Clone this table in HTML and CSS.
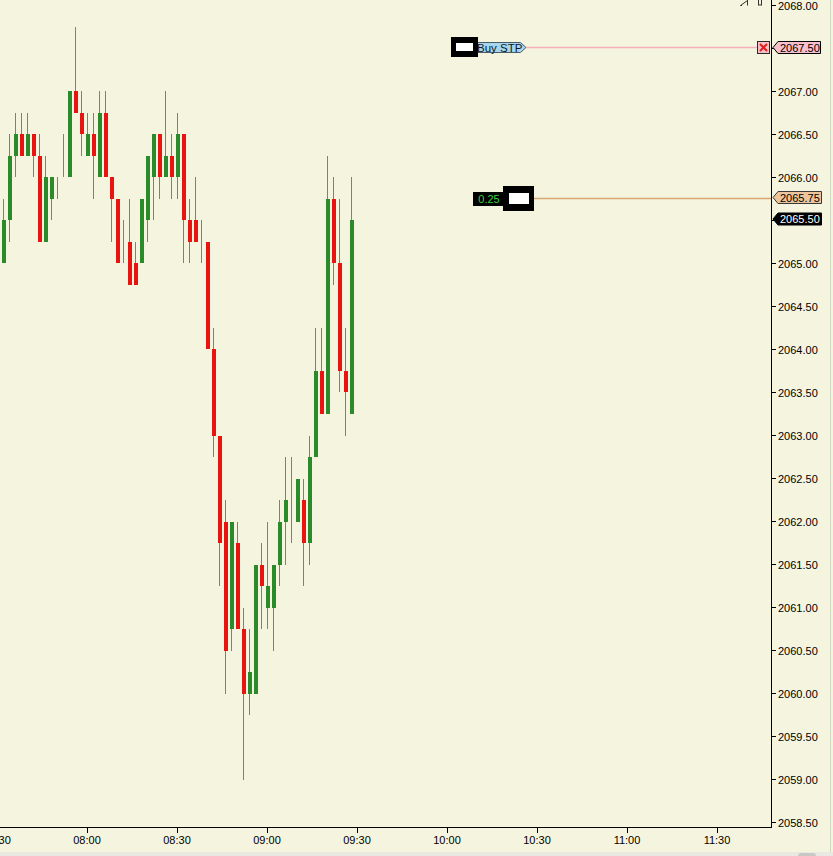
FILE: index.html
```html
<!DOCTYPE html>
<html>
<head>
<meta charset="utf-8">
<title>Chart</title>
<link rel="stylesheet" href="styles.css">
</head>
<body>
<div class="window">
  <div class="chart">
    <div class="plot">
      <svg class="plot-svg" width="771" height="827" viewBox="0 0 771 827">
        <g transform="translate(0 5) scale(1 21.526)" shape-rendering="crispEdges">
          <g class="wick">
            <rect x="3" y="9" width="1" height="3"/>
            <rect x="9" y="6" width="1" height="5"/>
            <rect x="15" y="5" width="1" height="3"/>
            <rect x="21" y="5" width="1" height="2"/>
            <rect x="27" y="5" width="1" height="2"/>
            <rect x="33" y="6" width="1" height="2"/>
            <rect x="39" y="6" width="1" height="5"/>
            <rect x="45" y="7" width="1" height="4"/>
            <rect x="51" y="8" width="1" height="2"/>
            <rect x="57" y="8" width="1" height="1"/>
            <rect x="63" y="6" width="1" height="2"/>
            <rect x="75" y="1" width="1" height="4"/>
            <rect x="81" y="4" width="1" height="3"/>
            <rect x="87" y="5" width="1" height="2"/>
            <rect x="93" y="5" width="1" height="4"/>
            <rect x="99" y="4" width="1" height="4"/>
            <rect x="105" y="4" width="1" height="4"/>
            <rect x="111" y="8" width="1" height="3"/>
            <rect x="123" y="10" width="1" height="2"/>
            <rect x="129" y="9" width="1" height="4"/>
            <rect x="135" y="11" width="1" height="2"/>
            <rect x="147" y="7" width="1" height="4"/>
            <rect x="153" y="6" width="1" height="4"/>
            <rect x="159" y="6" width="1" height="3"/>
            <rect x="165" y="4" width="1" height="4"/>
            <rect x="171" y="6" width="1" height="3"/>
            <rect x="177" y="5" width="1" height="4"/>
            <rect x="183" y="6" width="1" height="6"/>
            <rect x="189" y="9" width="1" height="3"/>
            <rect x="195" y="8" width="1" height="3"/>
            <rect x="201" y="10" width="1" height="2"/>
            <rect x="213" y="15" width="1" height="6"/>
            <rect x="219" y="20" width="1" height="7"/>
            <rect x="225" y="23" width="1" height="9"/>
            <rect x="231" y="24" width="1" height="6"/>
            <rect x="237" y="24" width="1" height="5"/>
            <rect x="243" y="28" width="1" height="8"/>
            <rect x="249" y="29" width="1" height="4"/>
            <rect x="261" y="25" width="1" height="4"/>
            <rect x="267" y="24" width="1" height="5"/>
            <rect x="273" y="26" width="1" height="4"/>
            <rect x="279" y="23" width="1" height="4"/>
            <rect x="285" y="21" width="1" height="5"/>
            <rect x="291" y="21" width="1" height="4"/>
            <rect x="303" y="22" width="1" height="5"/>
            <rect x="309" y="20" width="1" height="6"/>
            <rect x="315" y="15" width="1" height="6"/>
            <rect x="321" y="15" width="1" height="4"/>
            <rect x="327" y="7" width="1" height="12"/>
            <rect x="333" y="8" width="1" height="5"/>
            <rect x="339" y="9" width="1" height="9"/>
            <rect x="345" y="15" width="1" height="5"/>
            <rect x="351" y="8" width="1" height="11"/>
          </g>
          <g class="up">
            <rect x="2" y="10" width="4" height="2"/>
            <rect x="8" y="7" width="4" height="3"/>
            <rect x="14" y="6" width="4" height="1"/>
            <rect x="26" y="6" width="4" height="1"/>
            <rect x="44" y="8" width="4" height="3"/>
            <rect x="50" y="8" width="4" height="1"/>
            <rect x="68" y="4" width="4" height="4"/>
            <rect x="86" y="6" width="4" height="1"/>
            <rect x="98" y="5" width="4" height="3"/>
            <rect x="140" y="9" width="4" height="3"/>
            <rect x="146" y="7" width="4" height="3"/>
            <rect x="152" y="6" width="4" height="2"/>
            <rect x="164" y="7" width="4" height="1"/>
            <rect x="176" y="6" width="4" height="2"/>
            <rect x="230" y="24" width="4" height="5"/>
            <rect x="248" y="31" width="4" height="1"/>
            <rect x="254" y="26" width="4" height="6"/>
            <rect x="266" y="27" width="4" height="1"/>
            <rect x="272" y="26" width="4" height="2"/>
            <rect x="278" y="24" width="4" height="2"/>
            <rect x="284" y="23" width="4" height="1"/>
            <rect x="296" y="22" width="4" height="2"/>
            <rect x="308" y="21" width="4" height="4"/>
            <rect x="314" y="17" width="4" height="4"/>
            <rect x="326" y="9" width="4" height="10"/>
            <rect x="350" y="10" width="4" height="9"/>
          </g>
          <g class="dn">
            <rect x="20" y="6" width="4" height="1"/>
            <rect x="32" y="6" width="4" height="1"/>
            <rect x="38" y="7" width="4" height="4"/>
            <rect x="74" y="4" width="4" height="1"/>
            <rect x="80" y="5" width="4" height="1"/>
            <rect x="92" y="6" width="4" height="1"/>
            <rect x="104" y="5" width="4" height="3"/>
            <rect x="110" y="8" width="4" height="1"/>
            <rect x="116" y="9" width="4" height="3"/>
            <rect x="128" y="11" width="4" height="2"/>
            <rect x="134" y="12" width="4" height="1"/>
            <rect x="158" y="6" width="4" height="2"/>
            <rect x="170" y="7" width="4" height="1"/>
            <rect x="182" y="6" width="4" height="4"/>
            <rect x="188" y="10" width="4" height="1"/>
            <rect x="194" y="10" width="4" height="1"/>
            <rect x="206" y="11" width="4" height="5"/>
            <rect x="212" y="16" width="4" height="4"/>
            <rect x="218" y="20" width="4" height="5"/>
            <rect x="224" y="24" width="4" height="6"/>
            <rect x="236" y="25" width="4" height="4"/>
            <rect x="242" y="29" width="4" height="3"/>
            <rect x="260" y="26" width="4" height="1"/>
            <rect x="302" y="23" width="4" height="2"/>
            <rect x="320" y="17" width="4" height="2"/>
            <rect x="332" y="9" width="4" height="3"/>
            <rect x="338" y="12" width="4" height="5"/>
            <rect x="344" y="17" width="4" height="1"/>
          </g>
        </g>

        <!-- toolbar icon remnants at top -->
        <g class="icon">
          <path d="M740.5 5.5 L747.5 0.5 M747.5 0 V5.5 M740.5 5.5 H742"/>
          <rect x="758.5" y="-1" width="3" height="6"/>
        </g>

        <!-- Buy STP order line -->
        <line class="order-line" x1="526" y1="47.5" x2="757" y2="47.5"/>
        <polygon class="order-tag" points="476.5,42.5 520.5,42.5 526,47.5 520.5,52.5 476.5,52.5"/>
        <text class="tag-text" x="477" y="51.5">Buy STP</text>
        <rect class="handle" x="451" y="37" width="27" height="20"/>
        <rect class="handle-in" x="456" y="43" width="17" height="8"/>
        <rect class="cancel" x="757.5" y="41.5" width="12" height="12"/>
        <path class="cancel-x" d="M760 44 L767 51 M767 44 L760 51"/>

        <!-- position line -->
        <line class="pos-line" x1="534" y1="198.5" x2="771" y2="198.5"/>
        <rect class="qty" x="473" y="192" width="32" height="14"/>
        <text class="qty-text" x="489" y="203">0.25</text>
        <rect class="handle" x="503" y="186" width="31" height="25"/>
        <rect class="handle-in" x="509" y="193" width="20" height="11"/>
      </svg>
    </div>

    <div class="price-axis">
      <svg class="axis-svg" width="58" height="828" viewBox="0 0 58 828">
        <g class="tick" shape-rendering="crispEdges">
          <path d="M0 5.5H4 M0 48.5H4 M0 91.5H4 M0 134.5H4 M0 177.5H4 M0 220.5H4 M0 263.5H4 M0 306.5H4 M0 349.5H4 M0 392.5H4 M0 435.5H4 M0 478.5H4 M0 521.5H4 M0 564.5H4 M0 607.5H4 M0 650.5H4 M0 693.5H4 M0 736.5H4 M0 779.5H4 M0 822.5H4"/>
        </g>
        <g class="ax">
          <text x="6" y="9.5">2068.00</text>
          <text x="6" y="95.5">2067.00</text>
          <text x="6" y="138.5">2066.50</text>
          <text x="6" y="181.5">2066.00</text>
          <text x="6" y="267.5">2065.00</text>
          <text x="6" y="310.5">2064.50</text>
          <text x="6" y="353.5">2064.00</text>
          <text x="6" y="396.5">2063.50</text>
          <text x="6" y="439.5">2063.00</text>
          <text x="6" y="482.5">2062.50</text>
          <text x="6" y="525.5">2062.00</text>
          <text x="6" y="568.5">2061.50</text>
          <text x="6" y="611.5">2061.00</text>
          <text x="6" y="654.5">2060.50</text>
          <text x="6" y="697.5">2060.00</text>
          <text x="6" y="740.5">2059.50</text>
          <text x="6" y="783.5">2059.00</text>
          <text x="6" y="826.5">2058.50</text>
        </g>
        <polygon class="mk-order" points="1,47.5 6,41.5 48.5,41.5 48.5,53.5 6,53.5"/>
        <text class="ax" x="8" y="51.5">2067.50</text>
        <polygon class="mk-pos" points="1,197.5 6,191.5 49.5,191.5 49.5,203.5 6,203.5"/>
        <text class="ax" x="8" y="201.5">2065.75</text>
        <polygon class="mk-last" points="1,219 6,213 49.5,213 49.5,225 6,225"/>
        <text class="ax mk-last-text" x="8" y="223">2065.50</text>
      </svg>
    </div>

    <div class="time-axis">
      <svg class="axis-svg" width="772" height="24" viewBox="0 0 772 24">
        <g class="tick" shape-rendering="crispEdges">
          <path d="M87.5 0V5 M177.5 0V5 M267.5 0V5 M357.5 0V5 M447.5 0V5 M537.5 0V5 M627.5 0V5 M717.5 0V5"/>
        </g>
        <g class="ax time">
          <text x="-3" y="16">07:30</text>
          <text x="87" y="16">08:00</text>
          <text x="177" y="16">08:30</text>
          <text x="267" y="16">09:00</text>
          <text x="357" y="16">09:30</text>
          <text x="447" y="16">10:00</text>
          <text x="537" y="16">10:30</text>
          <text x="627" y="16">11:00</text>
          <text x="717" y="16">11:30</text>
        </g>
      </svg>
    </div>

    <div class="corner"></div>
  </div>
  <div class="hscroll"><div class="thumb"></div></div>
</div>
</body>
</html>
```

FILE: styles.css
```css
html, body {
  margin: 0;
  padding: 0;
  background: #f5f4de;
}

.window {
  width: 833px;
  height: 856px;
  overflow: hidden;
  background: #f5f4de;
  display: flex;
  flex-direction: column;
}

.chart {
  width: 830px;
  height: 852px;
  display: grid;
  grid-template-columns: 772px 58px;
  grid-template-rows: 828px 24px;
  border-right: 1px solid #cfd6c2;
  background: #f5f4de;
}

.plot {
  border-right: 1px solid #000;
  border-bottom: 1px solid #000;
  overflow: hidden;
}

.plot-svg,
.axis-svg {
  display: block;
  overflow: hidden;
}

.price-axis,
.time-axis,
.corner {
  overflow: hidden;
}

.wick { fill: #7f7f7f; }
.up { fill: #2b8b2b; }
.dn { fill: #e8140f; }

.icon {
  fill: none;
  stroke: #333;
  stroke-width: 1;
}

.tick {
  fill: none;
  stroke: #000;
  stroke-width: 1;
}

.ax {
  font-family: "Liberation Sans", Arial, sans-serif;
  font-size: 11px;
  fill: #000;
}

.time {
  text-anchor: middle;
}

.order-line {
  stroke: #f6b0bd;
  stroke-width: 1.4;
}

.order-tag {
  fill: #a7d6ec;
  stroke: #4a5a66;
  stroke-width: 1;
}

.tag-text {
  font-family: "Liberation Sans", Arial, sans-serif;
  font-size: 11.5px;
  fill: #0b1b2b;
}

.handle { fill: #000; }
.handle-in { fill: #fff; }

.cancel {
  fill: #f6c0c8;
  stroke: #2a2a2a;
  stroke-width: 1;
}

.cancel-x {
  stroke: #e01e1e;
  stroke-width: 2;
  fill: none;
}

.pos-line {
  stroke: #d9a774;
  stroke-width: 1.3;
}

.qty { fill: #000; }

.qty-text {
  font-family: "Liberation Sans", Arial, sans-serif;
  font-size: 11px;
  fill: #3fd03f;
  text-anchor: middle;
}

.mk-order {
  fill: #f9bfcb;
  stroke: #000;
  stroke-width: 1;
}

.mk-pos {
  fill: #eec49a;
  stroke: #3a3a3a;
  stroke-width: 1;
}

.mk-last {
  fill: #000;
  stroke: #000;
  stroke-width: 1;
}

.mk-last-text {
  fill: #fff;
}

.hscroll {
  width: 833px;
  height: 4px;
  background: #e9e9e2;
  position: relative;
}

.thumb {
  position: absolute;
  left: 798px;
  top: 1px;
  width: 18px;
  height: 4px;
  border-radius: 3px 3px 0 0;
  background: #c8c8c4;
}
```
